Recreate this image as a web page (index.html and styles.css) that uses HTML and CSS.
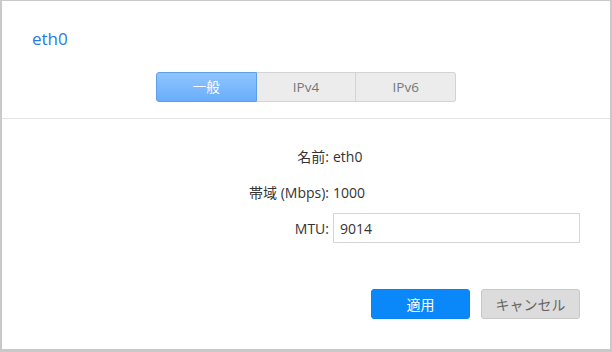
FILE: index.html
```html
<!DOCTYPE html>
<html>
<head>
<meta charset="utf-8">
<link rel="stylesheet" href="styles.css">
</head>
<body>
<div class="dialog">
  <div class="title">eth0</div>
  <div class="tabs">
    <div class="tab active">一般</div>
    <div class="tab">IPv4</div>
    <div class="tab last">IPv6</div>
  </div>
  <div class="sep"></div>
  <div class="form">
    <div class="row"><span class="label">名前:</span><span class="value">eth0</span></div>
    <div class="row"><span class="label">帯域 (Mbps):</span><span class="value">1000</span></div>
    <div class="row input-row"><span class="label">MTU:</span><input class="input" type="text" value="9014"></div>
  </div>
  <div class="actions">
    <button class="btn primary">適用</button>
    <button class="btn secondary">キャンセル</button>
  </div>
</div>
</body>
</html>
```
FILE: styles.css
```css
html, body {
  margin: 0;
  padding: 0;
  background: #fff;
}
.dialog {
  box-sizing: border-box;
  width: 612px;
  height: 352px;
  border: 2px solid #c9c9c9;
  border-top-width: 1px;
  border-bottom-width: 3px;
  font-family: "Open Sans", "Noto Sans CJK JP", sans-serif;
  font-size: 13px;
  color: #333;
  display: flex;
  flex-direction: column;
}
.title {
  color: #2a7ae2;
  font-size: 17px;
  line-height: 20px;
  padding: 28px 0 0 30px;
  height: 43px;
}
.tabs {
  display: flex;
  align-self: center;
  width: 300px;
  height: 30px;
}
.tab {
  flex: 1;
  box-sizing: border-box;
  text-align: center;
  line-height: 28px;
  font-size: 13.5px;
  color: #777;
  background: #ececec;
  border: 1px solid #d3d3d3;
  border-left: none;
}
.tab.last { border-radius: 0 3px 3px 0; }
.tab.active {
  background: linear-gradient(#8fc5fe, #69adfb);
  color: #fff;
  border: 1px solid #5d9fe8;
  border-radius: 3px 0 0 3px;
}
.sep {
  height: 1px;
  background: #e4e4e4;
  margin-top: 16px;
}
.form {
  display: flex;
  flex-direction: column;
  padding-top: 27px;
  font-size: 14px;
}
.row {
  display: flex;
  align-items: center;
  height: 20px;
  margin-bottom: 16px;
}
.label {
  width: 327px;
  text-align: right;
  box-sizing: border-box;
  flex: none;
}
.value { color: #333; margin-left: 4px; }
.input-row { height: 30px; margin-bottom: 0; margin-top: -5px; }
.input {
  box-sizing: border-box;
  width: 247px;
  height: 30px;
  border: 1px solid #d6d6d6;
  padding: 0 6px;
  font: inherit;
  color: #333;
  margin: 0 0 0 4px;
  outline: none;
}
.actions {
  display: flex;
  justify-content: flex-end;
  gap: 11px;
  padding: 46px 30px 0 0;
}
.btn {
  width: 99px;
  height: 30px;
  box-sizing: border-box;
  border-radius: 3px;
  font: inherit;
  font-size: 14px;
  margin: 0;
  padding: 0;
}
.btn.primary {
  background: #0a88fa;
  border: 1px solid #0a82f2;
  color: #fff;
}
.btn.secondary {
  background: #dcdcdc;
  border: 1px solid #c8c8c8;
  color: #666;
}
```
